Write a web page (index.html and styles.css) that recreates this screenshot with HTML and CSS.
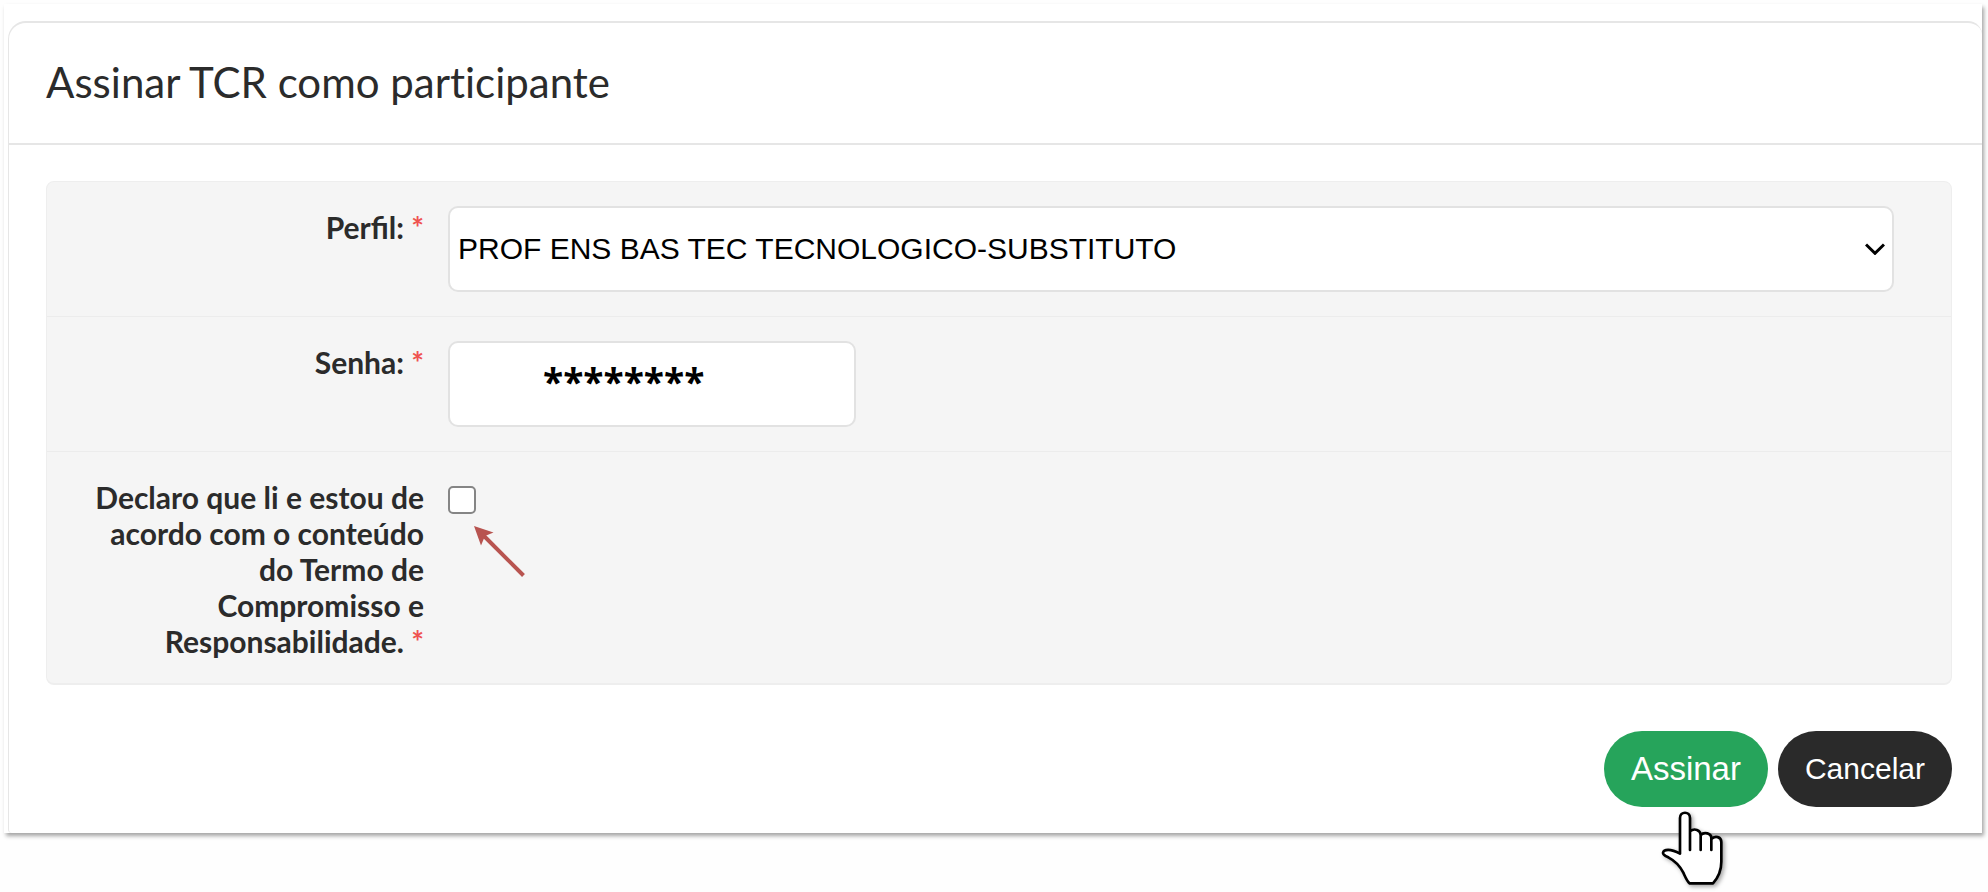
FILE: index.html
```html
<!DOCTYPE html>
<html lang="pt-BR">
<head>
<meta charset="utf-8">
<title>Assinar TCR como participante</title>
<link rel="stylesheet" href="styles.css">
</head>
<body>
<main class="frame">
  <section class="card">
    <header class="card-header">
      <h1 class="title">Assinar TCR como participante</h1>
    </header>
    <form class="form">
      <div class="panel">
        <div class="row">
          <label class="label" for="perfil">Perfil: <span class="required">*</span></label>
          <div class="select-wrap">
            <select class="control" id="perfil">
              <option>PROF ENS BAS TEC TECNOLOGICO-SUBSTITUTO</option>
            </select>
            <svg class="chevron" viewBox="0 0 20 12" aria-hidden="true"><path d="M1 1.5 10 10.3 19 1.5"/></svg>
          </div>
        </div>
        <div class="row">
          <label class="label" for="senha">Senha: <span class="required">*</span></label>
          <input class="control password" id="senha" type="text" value="********" autocomplete="off">
        </div>
        <div class="row">
          <label class="label" for="aceite">Declaro que li e estou de acordo com o conteúdo do Termo de Compromisso e Responsabilidade. <span class="required">*</span></label>
          <div class="check-wrap">
            <input class="check" id="aceite" type="checkbox">
            <svg class="arrow" viewBox="0 0 52 52" aria-hidden="true"><path class="arrow-line" d="M9 9 49.500 49.500"/><path class="arrow-head" d="M0 0 19.500 6.500 11 10 7 19.500Z"/></svg>
          </div>
        </div>
      </div>
      <div class="actions">
        <div class="submit-wrap">
          <button class="button submit" type="button">Assinar</button>
          <svg class="hand" viewBox="57 60 198 234" aria-hidden="true"><path d="M117 191V84C117 63 147 63 147 84V180V124C160 113 179 120 179 135V180V135C190 124 211 130 211 144V180V147C222 136 241 140 241 156V215C241 240 232 262 216 280H146C138 274 134 263 127 248C116 226 103 213 82 202C73 198 65 195 66 188C68 178 88 175 117 191Z"/></svg>
        </div>
        <button class="button cancel" type="button">Cancelar</button>
      </div>
    </form>
  </section>
</main>
</body>
</html>
```
FILE: styles.css
```css
* { box-sizing: border-box; }

body {
  min-height: 100vh;
  margin: 0;
  padding: 4px 6px 56px 4px;
  background: #fefefe;
  color: #2b2b2b;
  font-family: Lato, "Liberation Sans", sans-serif;
}

.frame {
  padding: 17px 0 0 4px;
  background: #fff;
  box-shadow: 2px 3px 4px rgba(0, 0, 0, 0.35);
}

.card {
  border: 2px solid #e6e6e6;
  border-width: 2px 0 0 1px;
  border-radius: 18px 14px 0 4px;
}

.card-header {
  padding: 31px 37px 33px;
  border-bottom: 2px solid #e6e6e6;
}

.title {
  margin: 0;
  font-size: 42px;
  font-weight: 400;
  font-variant-ligatures: none;
  line-height: 56px;
}

.form { padding: 36px 30px 26px 37px; }

.panel {
  background: #f5f5f5;
  border: 1px solid #eee;
  border-bottom-width: 2px;
  border-radius: 8px;
}

.row {
  display: grid;
  grid-template-columns: 330px 1fr;
  column-gap: 24px;
  padding: 24px 57px 24px 47px;
}

.row + .row { border-top: 1px solid #ececec; }

.label {
  padding-top: 3px;
  text-align: right;
  font-size: 30px;
  font-weight: 700;
  line-height: 36px;
}

.required { color: #ef5350; }

.select-wrap { position: relative; }

.control {
  display: block;
  width: 100%;
  height: 86px;
  padding: 0 8px 2px;
  border: 2px solid #e2e2e2;
  border-radius: 10px;
  background: #fff;
  color: #000;
  font-family: "Liberation Sans", Arial, sans-serif;
  font-size: 30px;
  appearance: none;
}

.chevron {
  position: absolute;
  top: 37px;
  right: 9px;
  width: 20px;
  height: 12px;
  fill: none;
  stroke: #000;
  stroke-width: 3;
}

.password {
  width: 408px;
  padding: 0 93px 6px;
  font-family: "Open Sans", sans-serif;
  font-size: 37px;
  font-weight: 700;
}

.check-wrap { position: relative; justify-self: start; }

.check {
  display: block;
  width: 28px;
  height: 28px;
  margin: 10px 0 0;
  border: 2px solid #858585;
  border-radius: 5px;
  background: #fff;
  appearance: none;
}

.check:checked { background: #2b2b2b; }

.arrow {
  position: absolute;
  top: 50px;
  left: 26px;
  width: 52px;
  height: 52px;
}

.arrow-line { fill: none; stroke: #b85450; stroke-width: 4; }
.arrow-head { fill: #b85450; }

.actions {
  display: flex;
  justify-content: flex-end;
  gap: 10px;
  margin-top: 46px;
}

.submit-wrap { position: relative; }

.button {
  height: 76px;
  padding: 0 27px;
  border: 0;
  border-radius: 38px;
  color: #fff;
  font-family: "Liberation Sans", Arial, sans-serif;
}

.submit { background: #26a45b; font-size: 33px; }
.cancel { background: #2a2a2a; font-size: 30px; }

.hand {
  position: absolute;
  top: 79px;
  left: 56px;
  width: 66px;
  height: 78px;
  overflow: visible;
  fill: #fff;
  stroke: #000;
  stroke-width: 8;
  stroke-linecap: round;
  stroke-linejoin: round;
  filter: drop-shadow(2px 2px 2px rgba(0, 0, 0, 0.35));
}
```
